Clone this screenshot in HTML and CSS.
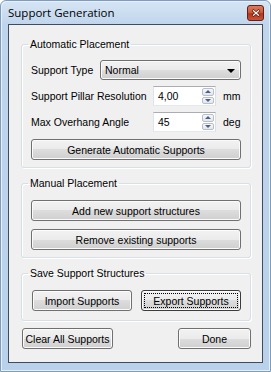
FILE: index.html
```html
<!DOCTYPE html>
<html lang="en">
<head>
    <meta charset="UTF-8">
    <meta name="viewport" content="width=device-width, initial-scale=1.0">
    <title>Support Generation</title>
    <link rel="stylesheet" href="styles.css">
</head>
<body>
    <div class="window">
        <div class="titlebar">
            <span class="title">Support Generation</span>
            <div class="close-btn" title="Close">
                <svg width="10" height="8" viewBox="0 0 10 8">
                    <path d="M2.5 1.8 L7.5 6.2 M7.5 1.8 L2.5 6.2" stroke="#5a2016" stroke-width="2.6" stroke-linecap="square"/>
                    <path d="M2.5 1.8 L7.5 6.2 M7.5 1.8 L2.5 6.2" stroke="#ffffff" stroke-width="1.3" stroke-linecap="square"/>
                </svg>
            </div>
        </div>

        <div class="client">
            <!-- Automatic placement -->
            <fieldset class="group group-auto">
                <legend>Automatic Placement</legend>
                <div class="field-row">
                    <label class="field-label type-label">Support Type</label>
                    <div class="combo">
                        <span>Normal</span>
                        <span class="combo-arrow"></span>
                    </div>
                </div>
                <div class="field-row">
                    <label class="field-label spin-label">Support Pillar Resolution</label>
                    <div class="spinbox">
                        <span class="spin-value">4,00</span>
                        <span class="spin-buttons">
                            <span class="spin-up"></span>
                            <span class="spin-down"></span>
                        </span>
                    </div>
                    <span class="unit">mm</span>
                </div>
                <div class="field-row">
                    <label class="field-label spin-label">Max Overhang Angle</label>
                    <div class="spinbox">
                        <span class="spin-value">45</span>
                        <span class="spin-buttons">
                            <span class="spin-up"></span>
                            <span class="spin-down"></span>
                        </span>
                    </div>
                    <span class="unit">deg</span>
                </div>
                <button class="btn btn-wide btn-generate">Generate Automatic Supports</button>
            </fieldset>

            <!-- Manual placement -->
            <fieldset class="group group-manual">
                <legend>Manual Placement</legend>
                <button class="btn btn-wide">Add new support structures</button>
                <button class="btn btn-wide">Remove existing supports</button>
            </fieldset>

            <!-- Save / load -->
            <fieldset class="group group-save">
                <legend>Save Support Structures</legend>
                <div class="btn-pair">
                    <button class="btn">Import Supports</button>
                    <button class="btn btn-focus">Export Supports</button>
                </div>
            </fieldset>

            <div class="dialog-actions">
                <button class="btn btn-clear">Clear All Supports</button>
                <button class="btn btn-done">Done</button>
            </div>
        </div>
    </div>
</body>
</html>
```

FILE: styles.css
```css
body {
    margin: 0;
    padding: 0;
    background: #ffffff;
    font-family: 'Liberation Sans', Arial, sans-serif;
    font-size: 10.5px;
    color: #000;
}

.window {
    box-sizing: border-box;
    width: 271px;
    height: 372px;
    display: flex;
    flex-direction: column;
    padding: 0 7px 8px 7px;
    background: linear-gradient(to bottom, #d6e5f4 0px, #bfd5ec 24px, #b9d1ea 100%);
    border: 1px solid #7f9cbc;
    border-radius: 6px 6px 0 0;
    box-shadow: inset 1px 1px 0 #e6f0fa, inset -1px -1px 0 #e6f0fa;
}

.titlebar {
    height: 23px;
    display: flex;
    align-items: flex-start;
    justify-content: space-between;
    flex-shrink: 0;
}

.title {
    font-family: 'Open Sans', 'Noto Sans', sans-serif;
    font-size: 11.5px;
    color: #000;
    padding-top: 4px;
    line-height: 16px;
}

.close-btn {
    box-sizing: border-box;
    width: 17px;
    height: 16px;
    margin-top: 4px;
    margin-right: -1px;
    border: 1px solid #5e2219;
    border-radius: 3px;
    background: #cc4a2c linear-gradient(to bottom, #dd7a5c 0%, #cf5a3c 45%, #b8321a 55%, #c8553a 100%);
    display: flex;
    align-items: center;
    justify-content: center;
}

.client {
    flex: 1;
    display: flex;
    flex-direction: column;
    background: #f0f0f0;
    border: 1px solid #3e4c5d;
    padding: 13px 11px 0 12px;
}

.group {
    margin: 0 0 9px 0;
    padding: 9px 9px 7px 9px;
    border: 1px solid #d5dfe5;
    border-radius: 3px;
    box-shadow: inset 1px 1px 0 #ffffff, 1px 1px 0 #ffffff;
    display: flex;
    flex-direction: column;
}

.group legend {
    padding: 0 2px;
    margin-left: -3px;
    line-height: 13px;
}

.group-auto {
    gap: 6px;
}

.group-manual {
    padding-top: 10px;
    gap: 8px;
}

.group-save {
    padding-top: 10px;
    padding-bottom: 9px;
    margin-bottom: 7px;
}

.field-row {
    display: flex;
    align-items: center;
    height: 20px;
}

.field-label {
    white-space: nowrap;
}

.type-label {
    width: 69px;
    flex-shrink: 0;
}

.spin-label {
    width: 122px;
    flex-shrink: 0;
}

/* buttons */
.btn {
    box-sizing: border-box;
    height: 21px;
    padding: 0 4px;
    border: 1px solid #707070;
    border-radius: 3px;
    background: linear-gradient(to bottom, #f2f2f2 0%, #ebebeb 50%, #dddddd 50%, #cfcfcf 100%);
    box-shadow: inset 0 0 0 1px #fbfbfb;
    font-family: 'Liberation Sans', Arial, sans-serif;
    font-size: 10.5px;
    color: #000;
    white-space: nowrap;
}

.btn-wide {
    width: 100%;
}

.btn-generate {
    margin-top: 1px;
}

.btn-pair {
    display: flex;
    gap: 9px;
    padding-left: 1px;
}

.btn-pair .btn {
    flex: 1;
}

.btn-focus {
    border-color: #3c3c3c;
    outline: 1px dotted #000;
    outline-offset: -4px;
}

.dialog-actions {
    display: flex;
    justify-content: space-between;
    padding-left: 1px;
    padding-right: 0;
}

.btn-clear {
    width: 91px;
    padding: 0 2px;
}

.btn-done {
    width: 73px;
}

/* combo box */
.combo {
    box-sizing: border-box;
    flex: 1;
    height: 20px;
    display: flex;
    align-items: center;
    justify-content: space-between;
    padding: 0 5px 0 4px;
    border: 1px solid #707070;
    border-radius: 3px;
    background: linear-gradient(to bottom, #f2f2f2 0%, #ebebeb 50%, #dddddd 50%, #cfcfcf 100%);
    box-shadow: inset 0 0 0 1px #fbfbfb;
}

.combo-arrow {
    width: 0;
    height: 0;
    border-left: 4px solid transparent;
    border-right: 4px solid transparent;
    border-top: 4px solid #000;
    margin-top: 1px;
}

/* spin box */
.spinbox {
    box-sizing: border-box;
    width: 63px;
    height: 20px;
    display: flex;
    align-items: stretch;
    background: #fff;
    border: 1px solid;
    border-color: #abadb3 #dbdfe6 #e3e9ef #e2e3ea;
    padding: 1px 1px 1px 4px;
}

.spin-value {
    flex: 1;
    line-height: 16px;
}

.spin-buttons {
    width: 12px;
    display: flex;
    flex-direction: column;
    gap: 1px;
}

.spin-up,
.spin-down {
    flex: 1;
    box-sizing: border-box;
    border: 1px solid #b8bfca;
    border-radius: 2px;
    background: linear-gradient(to bottom, #f6f7f9, #e3e6eb);
    display: flex;
    align-items: center;
    justify-content: center;
}

.spin-up::after,
.spin-down::after {
    content: "";
    width: 0;
    height: 0;
    border-left: 3px solid transparent;
    border-right: 3px solid transparent;
}

.spin-up::after {
    border-bottom: 3px solid #4d6185;
}

.spin-down::after {
    border-top: 3px solid #4d6185;
}

.unit {
    margin-left: 7px;
}
```
